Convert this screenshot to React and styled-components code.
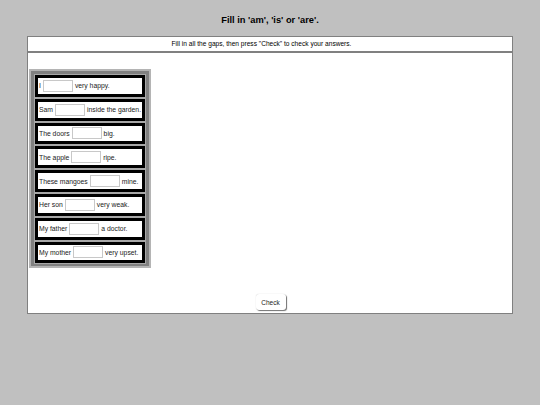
import React from 'react'
import styled, { createGlobalStyle } from 'styled-components'

const GlobalStyle = createGlobalStyle`
    html, body {
        margin: 0;
        padding: 0;
        background: #c0c0c0;
        font-family: "Liberation Sans", Arial, sans-serif;
    }
`

const Page = styled.div`
    width: 540px;
    height: 405px;
    padding-top: 14px;
    box-sizing: border-box;
`

const Title = styled.h2`
    margin: 0 0 10px;
    font-size: 9.3px;
    font-weight: bold;
    text-align: center;
    color: #000;
    line-height: 12px;
`

const MainBox = styled.div`
    margin: 0 27px;
    background: #fff;
    border: 1px solid #808080;
    height: 278px;
    box-sizing: border-box;
    display: flex;
    flex-direction: column;
`

const Instructions = styled.div`
    height: 14px;
    line-height: 14px;
    font-size: 6.6px;
    text-align: center;
    padding-right: 17px;
    color: #000;
    border-bottom: 2px solid #808080;
`

const Content = styled.div`
    flex: 1;
    display: flex;
    flex-direction: column;
    padding: 16px 0 0 1px;
`

const Table = styled.div`
    align-self: flex-start;
    display: flex;
    flex-direction: column;
    background: #808080;
    border: 2px solid #b4b4b4;
    padding: 3px 3px 2px;
`

const Row = styled.div`
    border: 1px solid #a8a8a8;
`

const Cell = styled.div`
    border: 3px solid #000;
    background: #fff;
    height: 15.8px;
    display: flex;
    align-items: center;
    gap: 1px;
    padding: 0 1px;
    font-size: 6.8px;
    color: #222;
    white-space: nowrap;
`

const Gap = styled.input`
    width: 30px;
    height: 12px;
    box-sizing: border-box;
    border: 1px solid #c8c8c8;
    padding: 0;
    margin: 0 1px;
    background: #fff;
`

const ButtonBar = styled.div`
    margin-top: auto;
    padding-bottom: 3px;
    display: flex;
    justify-content: center;
`

const CheckButton = styled.button`
    width: 30px;
    height: 16px;
    padding: 0;
    background: #fff;
    border: none;
    border-radius: 3px;
    box-shadow: 1px 1px 1px #707070, 0 0 1px #c0c0c0;
    font-family: "Liberation Sans", Arial, sans-serif;
    font-size: 6.5px;
    color: #222;
`

const sentences = [
    ['I', 'very happy.'],
    ['Sam', 'inside the garden.'],
    ['The doors', 'big.'],
    ['The apple', 'ripe.'],
    ['These mangoes', 'mine.'],
    ['Her son', 'very weak.'],
    ['My father', 'a doctor.'],
    ['My mother', 'very upset.'],
]

export default function App() {
    return (
        <Page>
            <GlobalStyle />
            <Title>Fill in 'am', 'is' or 'are'.</Title>
            <MainBox>
                <Instructions>Fill in all the gaps, then press "Check" to check your answers.</Instructions>
                <Content>
                    <Table>
                        {sentences.map(([before, after], i) => (
                            <Row key={i}>
                                <Cell>
                                    <span>{before}</span>
                                    <Gap type="text" />
                                    <span>{after}</span>
                                </Cell>
                            </Row>
                        ))}
                    </Table>
                    <ButtonBar>
                        <CheckButton>Check</CheckButton>
                    </ButtonBar>
                </Content>
            </MainBox>
        </Page>
    )
}
